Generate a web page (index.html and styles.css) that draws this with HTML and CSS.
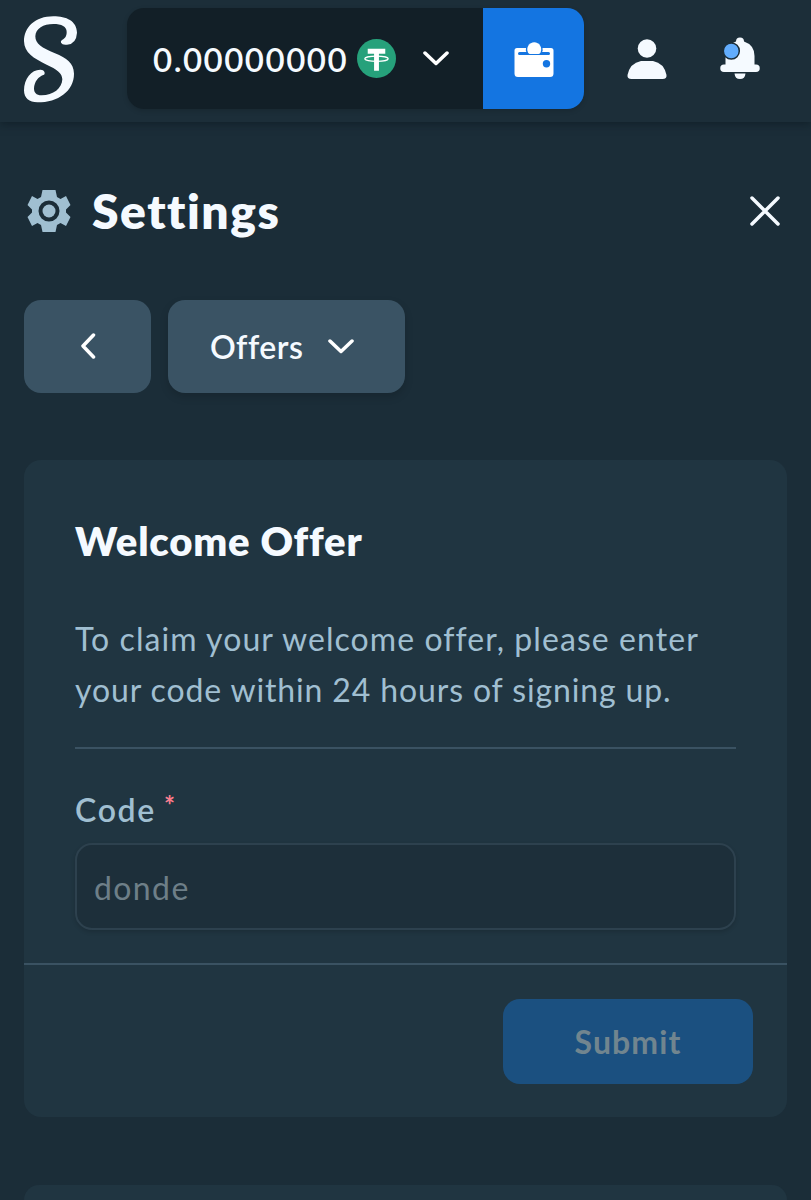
FILE: index.html
```html
<!DOCTYPE html>
<html lang="en">
<head>
<meta charset="utf-8">
<title>Settings</title>
<link rel="stylesheet" href="styles.css">
</head>
<body>
<header class="topbar">
  <svg class="logo" viewBox="0 0 180 270" aria-label="Home"><path d="M123 89Q127 97 141 95Q169 93 171 59C170 24 140 10 100 10C45 10 12 43 12 85C13 119 40 136 80 155C110 169 127 180 127 199C126 226 100 247 65 247C48 247 42 239 42 226C43 206 55 190 72 185C77 181 73 170 62 170C35 169 12 196 12 232C12 256 28 268 52 268C115 268 162 234 162 182C161 149 140 136 105 121C65 104 46 93 46 70C47 46 70 33 100 33C125 33 140 41 140 57C140 72 134 76 126 81Q121 84 123 89Z"/></svg>
  <div class="wallet">
    <button class="balance">
      <span class="amount">0.00000000</span>
      <svg class="coin" viewBox="0 0 40 40"><circle cx="20" cy="20" r="20" fill="#26a17b"/><path fill="#fff" d="M11 10h18v5h-6.500v17.500h-5V15H11z"/><ellipse cx="20" cy="20.300" rx="12" ry="2.700" fill="none" stroke="#fff" stroke-width="1.300"/></svg>
      <svg class="chevron" viewBox="0 0 26 15"><path d="M2 2l11 10.500L24 2"/></svg>
    </button>
    <button class="wallet-button" aria-label="Wallet">
      <svg viewBox="0 0 40 36"><path fill="#fff" d="M3 7h9q-.5 3 .5 4H5.500a1.500 1.500 0 0 0 0 3h29a1.500 1.500 0 0 0 0-3H28q1-1 .5-4H37q2.500 0 2.500 2.500v23Q39.500 36 36 36H4Q.5 36 .5 32.500v-23Q.5 7 3 7z"/><path fill="#fff" d="M14 11.500a7 7 0 1 1 12.500 0q-1 1.500-2 1.500h-8.500q-1 0-2-1.500z"/><circle cx="32.500" cy="22.800" r="3.700" fill="#1475e1"/></svg>
    </button>
  </div>
  <svg class="user" viewBox="0 0 40 40"><circle cx="20" cy="9.500" r="9.300"/><path d="M14 22h12q11 2 13.500 14 .5 4-4 4h-31q-4.500 0-4-4Q3 24 14 22z"/></svg>
  <svg class="bell" viewBox="0 0 40 42"><path d="M16 4.500a4 4 0 0 1 8 0Q34.500 8 34.500 19v8.500H36a3.700 3.700 0 0 1 0 7.500H4a3.700 3.700 0 0 1 0-7.500h1.500V19Q5.500 8 16 4.500zM14.500 36.500h11Q25 42 20 42t-5.500-5.500z"/><circle class="dot" cx="11.300" cy="14" r="8"/></svg>
</header>
<main class="page">
  <div class="heading">
    <svg class="gear" viewBox="0 0 44 44"><path fill-rule="evenodd" d="M15.500 1h13l1.500 7 3.500 2 5.500-3 4.500 9-4.500 4.500v3l4.500 4.500-4.500 9-5.500-3-3.500 2-1.500 7h-13l-1.500-7-3.500-2L5 37 .5 28 5 23.500v-3L.5 16 5 7l5.500 3 3.500-2zM22 11.500a10.500 10.500 0 1 0 0 21 10.500 10.500 0 0 0 0-21z"/><circle cx="22" cy="22" r="6.500"/></svg>
    <h1>Settings</h1>
    <svg class="close" viewBox="0 0 30 30"><path d="M2 2l26 26M28 2L2 28"/></svg>
  </div>
  <nav class="tabs">
    <button class="back" aria-label="Back"><svg viewBox="0 0 16 26"><path d="M13.500 2L3 13l10.500 11"/></svg></button>
    <button class="select"><span>Offers</span><svg class="chevron" viewBox="0 0 26 15"><path d="M2 2l11 10.500L24 2"/></svg></button>
  </nav>
  <section class="card">
    <div class="card-body">
      <h2>Welcome Offer</h2>
      <p><span class="line-one">To claim your welcome offer, please enter</span><br><span class="line-two">your code within 24 hours of signing up.</span></p>
      <label for="code"><span>Code</span><span class="required">*</span></label>
      <input id="code" type="text" placeholder="donde">
    </div>
    <footer><button class="submit" disabled>Submit</button></footer>
  </section>
  <section class="card next-card"></section>
</main>
</body>
</html>
```
FILE: styles.css
```css
* { box-sizing: border-box; }
body {
  margin: 0;
  height: 1200px;
  background: #1b2d38;
  color: #f5faff;
  font-family: Lato, "Open Sans", sans-serif;
}
button { border: 0; padding: 0; font: inherit; color: inherit; }
svg { display: block; flex: none; }
h1, h2, p { margin: 0; }

.topbar {
  position: relative;
  display: flex;
  height: 122px;
  padding: 8px 0 0 20px;
  background: #1c2e39;
  box-shadow: 0 2px 8px rgba(8, 20, 28, .5);
}
.logo { width: 60px; height: 90px; margin-top: 5px; fill: #f5faff; }
.wallet {
  display: flex;
  width: 457px;
  height: 101px;
  margin-left: 47px;
  border-radius: 17px;
  overflow: hidden;
  box-shadow: 0 2px 5px rgba(0, 0, 0, .15);
}
.balance { display: flex; align-items: center; width: 356px; padding-left: 26px; background: #121f27; }
.amount { width: 195px; font-size: 33px; font-weight: 600; letter-spacing: 1.5px; text-align: left; white-space: nowrap; }
.coin { width: 39px; height: 39px; margin-left: 9px; }
.chevron { width: 26px; height: 15px; fill: none; stroke: #fff; stroke-width: 3.500; stroke-linecap: round; stroke-linejoin: round; }
.balance .chevron { margin-left: 27px; }
.wallet-button { display: grid; place-items: center; width: 101px; background: #1475e1; }
.wallet-button svg { width: 40px; height: 36px; }
.user { width: 40px; height: 40px; margin: 31px 0 0 43px; fill: #f5faff; }
.bell { width: 40px; height: 42px; margin: 29px 0 0 53px; fill: #f5faff; }
.dot { fill: #62adfd; stroke: #1c2e39; stroke-width: 1.500; }

.page { padding: 0 24px; }
.heading { display: flex; align-items: center; height: 60px; margin-top: 59px; padding: 0 7px 0 3px; }
.gear { width: 44px; height: 44px; fill: #a0bfd1; }
h1 { margin-left: 21px; font-size: 48px; line-height: 60px; font-weight: 800; letter-spacing: 1.5px; white-space: nowrap; }
.close { width: 30px; height: 30px; margin-left: auto; fill: none; stroke: #f5faff; stroke-width: 3.500; stroke-linecap: round; }

.tabs { display: flex; gap: 17px; height: 93px; margin-top: 59px; }
.back, .select { border-radius: 17px; background: #3a5364; }
.back { display: grid; place-items: center; width: 127px; }
.back svg { width: 16px; height: 26px; margin-bottom: 1px; fill: none; stroke: #fff; stroke-width: 3.500; stroke-linecap: round; stroke-linejoin: round; }
.select { display: flex; align-items: center; width: 237px; padding-left: 42px; font-size: 32px; font-weight: 600; box-shadow: 0 4px 8px rgba(0, 0, 0, .15); }
.select span { width: 118px; letter-spacing: .5px; text-align: left; }

.card { height: 657px; margin-top: 67px; border-radius: 17px; background: #203541; }
.card-body { height: 505px; padding: 54px 51px 0; border-bottom: 2px solid #3a5262; }
h2 { font-size: 40px; line-height: 54px; font-weight: 800; letter-spacing: .8px; white-space: nowrap; }
p { height: 136px; margin-top: 45px; border-bottom: 2px solid #3a5262; color: #a0bfd1; font-size: 32px; line-height: 51px; white-space: nowrap; }
.line-one { letter-spacing: 1.070px; }
.line-two { letter-spacing: .87px; }
label { display: flex; height: 40px; margin-top: 41px; color: #a0bfd1; font-size: 32px; line-height: 40px; font-weight: 600; letter-spacing: 1.7px; }
.required { margin-left: 8px; color: #fb7d8d; font-size: 26px; line-height: 31px; font-weight: 700; }
input {
  display: block;
  width: 661px;
  height: 87px;
  margin-top: 13px;
  padding: 1px 17px 0;
  border: 2px solid #2d414e;
  border-radius: 17px;
  outline: 0;
  background: #1d2f3a;
  font: 32px Lato, sans-serif;
  letter-spacing: 1.400px;
  box-shadow: 0 2px 4px rgba(0, 0, 0, .15);
}
input::placeholder { color: #6e7f88; opacity: 1; }
footer { display: flex; justify-content: flex-end; padding: 34px 34px 33px; }
.submit { width: 250px; height: 85px; border-radius: 17px; background: #1b5080; color: #71858f; font-size: 32px; font-weight: 700; letter-spacing: 1.100px; }
.next-card { height: 15px; margin-top: 68px; border-radius: 17px 17px 0 0; }
```
